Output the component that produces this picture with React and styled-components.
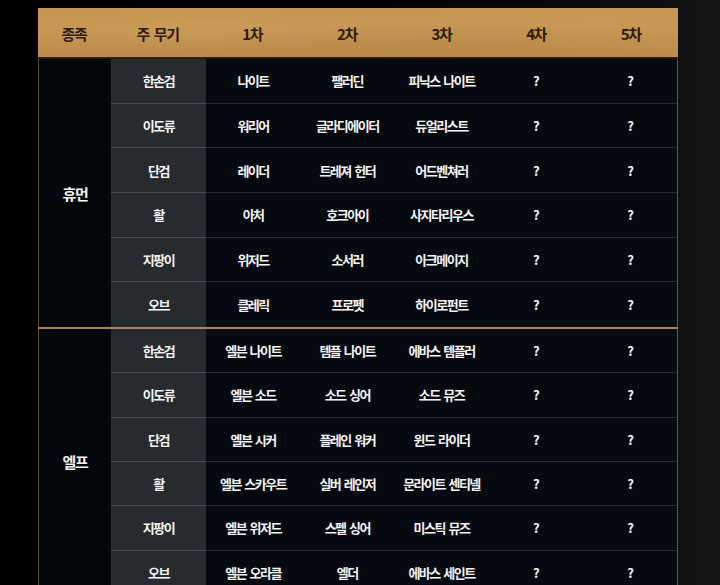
import React from 'react'
import styled, { createGlobalStyle } from 'styled-components'

const GlobalStyle = createGlobalStyle`
  html, body {
    margin: 0;
    padding: 0;
  }
  body {
    background: linear-gradient(90deg, #000 0%, #030303 55%, #0d0d0d 90%, #161616 100%);
    font-family: "Noto Sans CJK KR", "Noto Sans", sans-serif;
    min-height: 585px;
  }
`

const Page = styled.div`
  padding: 8px 42px 0 38px;
  height: 585px;
  box-sizing: border-box;
  overflow: hidden;
`

const Table = styled.div`
  width: 640px;
`

const cols = '72px 95px repeat(5, 1fr)'

const HeaderRow = styled.div`
  display: grid;
  grid-template-columns: ${cols};
  height: 49px;
  align-items: center;
  background:
    radial-gradient(ellipse at 25% 40%, rgba(214, 168, 100, 0.35), transparent 40%),
    radial-gradient(ellipse at 60% 80%, rgba(160, 115, 55, 0.2), transparent 45%),
    radial-gradient(ellipse at 88% 30%, rgba(212, 160, 95, 0.3), transparent 35%),
    linear-gradient(180deg, #c59752 0%, #c39450 60%, #bb8c4b 100%);
  border-bottom: 2px solid #2e1e0e;
`

const HeadCell = styled.div`
  text-align: center;
  font-size: 15px;
  font-weight: 700;
  color: #2c1a0b;
  letter-spacing: -1.4px;
  word-spacing: 3px;
  padding-top: 1px;
`

const Group = styled.div`
  display: grid;
  grid-template-columns: ${cols};
  grid-template-rows: repeat(6, 1fr);
  height: ${p => p.$height}px;
  border-left: 1px solid #5e503c;
  border-right: 1px solid #6a5840;
  border-bottom: ${p => (p.$divider ? '2px solid #a9875a' : 'none')};
  background: #04080e;
`

const RaceCell = styled.div`
  grid-row: 1 / -1;
  grid-column: 1;
  display: flex;
  align-items: center;
  justify-content: center;
  background: #03070c;
  color: #f4f4f4;
  font-size: 15px;
  font-weight: 700;
  letter-spacing: -1.4px;
`

const Cell = styled.div`
  display: flex;
  align-items: center;
  justify-content: center;
  color: #f4f4f4;
  font-size: 13px;
  font-weight: 700;
  letter-spacing: -1.5px;
  word-spacing: 2px;
  white-space: nowrap;
  background: ${p => (p.$weapon ? '#272b30' : '#050a11')};
  border-bottom: ${p => (p.$last ? 'none' : p.$weapon ? '1px solid #4a4e55' : '1px solid #262a31')};
`

const human = [
  ['한손검', '나이트', '팰러딘', '피닉스 나이트'],
  ['이도류', '워리어', '글라디에이터', '듀얼리스트'],
  ['단검', '레이더', '트레져 헌터', '어드벤쳐러'],
  ['활', '아처', '호크아이', '사지타리우스'],
  ['지팡이', '위저드', '소서러', '아크메이지'],
  ['오브', '클레릭', '프로펫', '하이로펀트'],
]

const elf = [
  ['한손검', '엘븐 나이트', '템플 나이트', '에바스 템플러'],
  ['이도류', '엘븐 소드', '소드 싱어', '소드 뮤즈'],
  ['단검', '엘븐 시커', '플레인 워커', '윈드 라이더'],
  ['활', '엘븐 스카우트', '실버 레인저', '문라이트 센티넬'],
  ['지팡이', '엘븐 위저드', '스펠 싱어', '미스틱 뮤즈'],
  ['오브', '엘븐 오라클', '엘더', '에바스 세인트'],
]

const heads = ['종족', '주 무기', '1차', '2차', '3차', '4차', '5차']

function RaceGroup({ name, rows, height, divider, lastOpen }) {
  return (
    <Group $height={height} $divider={divider}>
      <RaceCell>{name}</RaceCell>
      {rows.map((r, i) => {
        const last = i === rows.length - 1 && !lastOpen
        return (
          <React.Fragment key={i}>
            <Cell $weapon $last={last}>{r[0]}</Cell>
            <Cell $last={last}>{r[1]}</Cell>
            <Cell $last={last}>{r[2]}</Cell>
            <Cell $last={last}>{r[3]}</Cell>
            <Cell $last={last}>?</Cell>
            <Cell $last={last}>?</Cell>
          </React.Fragment>
        )
      })}
    </Group>
  )
}

export default function App() {
  return (
    <Page>
      <GlobalStyle />
      <Table>
        <HeaderRow>
          {heads.map(h => (
            <HeadCell key={h}>{h}</HeadCell>
          ))}
        </HeaderRow>
        <RaceGroup name="휴먼" rows={human} height={268} divider />
        <RaceGroup name="엘프" rows={elf} height={266} lastOpen />
      </Table>
    </Page>
  )
}
